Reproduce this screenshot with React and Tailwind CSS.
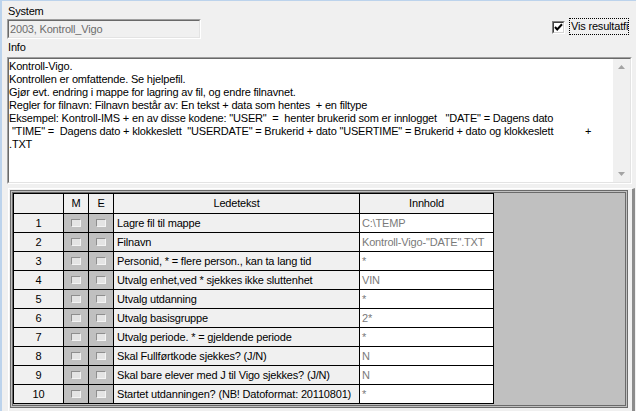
const rows = [
  ["1", "Lagre fil til mappe", "C:\\TEMP"],
  ["2", "Filnavn", 'Kontroll-Vigo-"DATE".TXT'],
  ["3", "Personid, * = flere person., kan ta lang tid", "*"],
  ["4", "Utvalg enhet,ved * sjekkes ikke sluttenhet", "VIN"],
  ["5", "Utvalg utdanning", "*"],
  ["6", "Utvalg basisgruppe", "2*"],
  ["7", "Utvalg periode. * = gjeldende periode", "*"],
  ["8", "Skal Fullførtkode sjekkes? (J/N)", "N"],
  ["9", "Skal bare elever med J til Vigo sjekkes? (J/N)", "N"],
  ["10", "Startet utdanningen? (NB! Datoformat: 20110801)", "*"],
];

const infoLines = [
  "Kontroll-Vigo.",
  "Kontrollen er omfattende. Se hjelpefil.",
  "Gjør evt. endring i mappe for lagring av fil, og endre filnavnet.",
  "Regler for filnavn: Filnavn består av: En tekst + data som hentes  + en filtype",
  'Eksempel: Kontroll-IMS + en av disse kodene: "USER"  =  henter brukerid som er innlogget   "DATE" = Dagens dato',
  ' "TIME" =  Dagens dato + klokkeslett  "USERDATE" = Brukerid + dato "USERTIME" = Brukerid + dato og klokkeslett           +',
  ".TXT",
];

function MiniBox() {
  return (
    <div className="w-[10px] h-[8px] bg-[#e4e4e4] border border-[#8e8e8e] border-r-[#f4f4f4] border-b-[#f4f4f4]" />
  );
}

export default function App() {
  return (
    <div className="w-[636px] h-[411px] overflow-hidden bg-[#f0f0f0] border-t border-l-2 border-[#bcd3ec] text-[11px] leading-[13px] text-black font-['Liberation_Sans',Arial,sans-serif] tracking-[-0.18px] flex flex-col">
      {/* top row */}
      <div className="flex justify-between items-start">
        <div className="flex flex-col">
          <div className="ml-[6px] mt-[4px]">System</div>
          <div className="ml-[5px] mt-px w-[194px] h-[20px] border border-[#a0a0a0] border-r-white border-b-white">
            <div className="h-full border border-[#696969] border-r-[#e3e3e3] border-b-[#e3e3e3] pl-px flex items-center text-[#6d6d6d]">
              2003, Kontroll_Vigo
            </div>
          </div>
        </div>
        <div className="flex items-start mt-[17px] mr-[7px]">
          <div className="mt-[3px] w-[13px] h-[13px] bg-white border border-[#808080] border-r-white border-b-white">
            <div className="w-full h-full border border-[#404040] border-r-[#d4d4d4] border-b-[#d4d4d4] flex items-center justify-center">
              <svg width="9" height="9" viewBox="0 0 9 9">
                <path d="M1 4 L3.2 6.4 L8 1.2" stroke="#000" strokeWidth="2" fill="none" />
              </svg>
            </div>
          </div>
          <div className="ml-[4px] w-[60px] h-[17px] border border-dotted border-black whitespace-nowrap overflow-hidden flex items-center pl-px">
            Vis resultatfil
          </div>
        </div>
      </div>

      <div className="ml-[6px] mt-[2px]">Info</div>

      {/* info textarea */}
      <div className="ml-[5px] mt-[3px] w-[625px] h-[127px] border border-[#a0a0a0] border-r-white border-b-white">
        <div className="h-full border border-[#696969] border-r-[#e3e3e3] border-b-[#e3e3e3] flex bg-white">
          <div className="flex-1 pt-px overflow-hidden">
            {infoLines.map((l, i) => (
              <div key={i} className="whitespace-pre">{l}</div>
            ))}
          </div>
          <div className="w-[17px] bg-[#f0f0f0] flex flex-col items-center justify-between py-[6px]">
            <svg width="7" height="4" viewBox="0 0 7 4">
              <path d="M0 4 L3.5 0 L7 4 Z" fill="#a3a3a3" />
            </svg>
            <svg width="7" height="4" viewBox="0 0 7 4">
              <path d="M0 0 L7 0 L3.5 4 Z" fill="#a3a3a3" />
            </svg>
          </div>
        </div>
      </div>

      {/* grid frame */}
      <div className="ml-[6px] mt-[4px] w-[627px] flex-1 min-h-0 border-t border-l border-white border-r-[3px] border-r-[#8c8c8c] pt-px pl-px pr-[4px]">
        <div className="h-[218px] border-[3px] border-double border-[#6a6a6a] bg-[#c0c0c0] overflow-hidden">
          <div className="w-[481px] border-l border-t border-black grid grid-cols-[50px_25px_25px_246px_134px]">
            <div className="h-[20px] border-r border-b border-black bg-[#f0f0f0]" />
            <div className="h-[20px] border-r border-b border-black bg-[#f0f0f0] flex items-center justify-center">M</div>
            <div className="h-[20px] border-r border-b border-black bg-[#f0f0f0] flex items-center justify-center">E</div>
            <div className="h-[20px] border-r border-b border-black bg-[#f0f0f0] flex items-center justify-center">Ledetekst</div>
            <div className="h-[20px] border-r border-b border-black bg-[#f0f0f0] flex items-center justify-center">Innhold</div>
            {rows.map(([n, label, val]) => (
              <div key={n} className="contents">
                <div className="h-[19px] border-r border-b border-black bg-[#f0f0f0] flex items-center justify-center">{n}</div>
                <div className="h-[19px] border-r border-b border-black bg-[#c0c0c0] flex items-center justify-center"><MiniBox /></div>
                <div className="h-[19px] border-r border-b border-black bg-[#c0c0c0] flex items-center justify-center"><MiniBox /></div>
                <div className="h-[19px] border-r border-b border-black bg-[#f0f0f0] flex items-center pl-[3px] whitespace-nowrap overflow-hidden">{label}</div>
                <div className="h-[19px] border-r border-b border-black bg-white flex items-center pl-[2px] whitespace-nowrap overflow-hidden text-[#7a7a7a]">{val}</div>
              </div>
            ))}
          </div>
        </div>
      </div>
    </div>
  );
}
